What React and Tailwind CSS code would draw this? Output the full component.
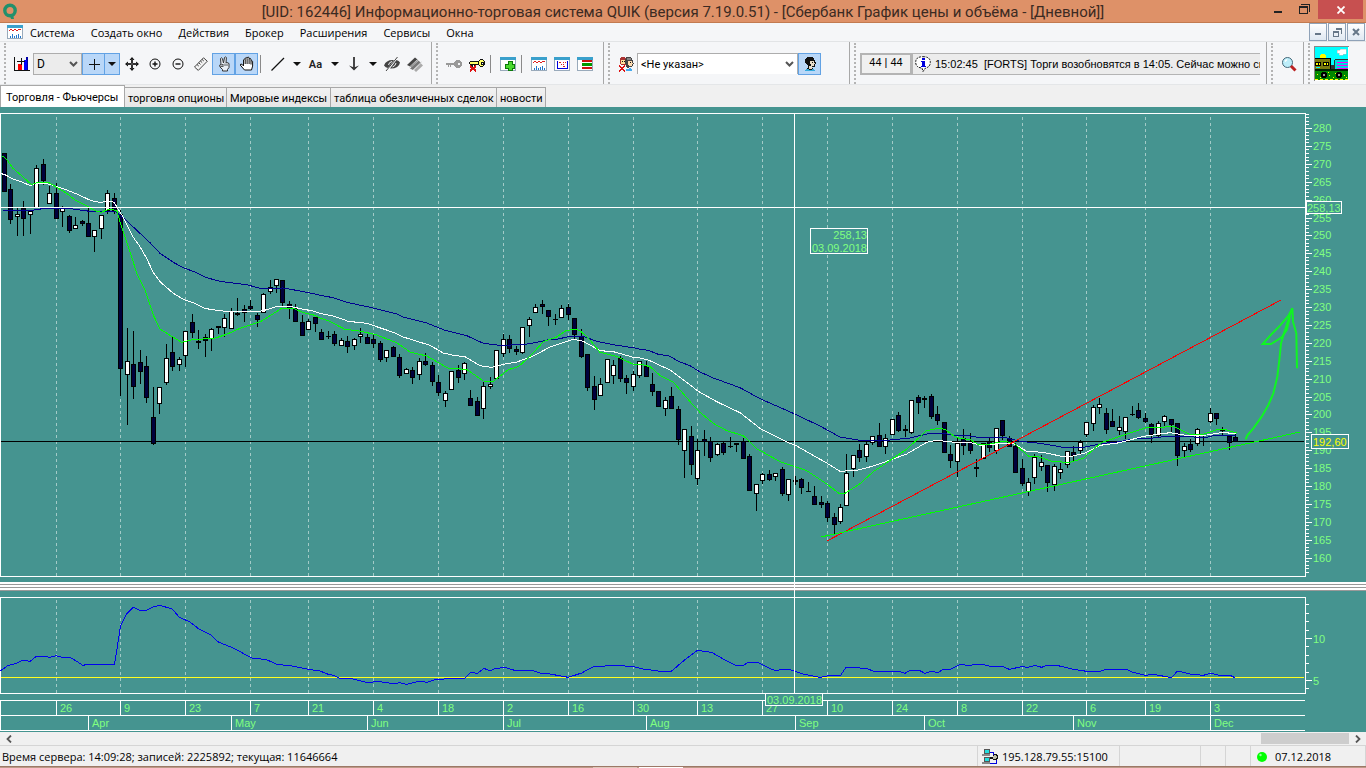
import React from "react";

const UI = "font-['Roboto','Noto_Sans',sans-serif]";
const HUMANIST = "font-['Open_Sans','Noto_Sans',sans-serif]";
const SANS = "font-['Liberation_Sans',Arial,sans-serif]";

/* ---------- chart data: samples are stored in thirds of a pixel, grouped by origin ---------- */

// x, high, body top, body bottom, low, rising (1) or falling (0)
const CANDLES = [
  { ox: 0, oy: 110, rows: [
    [13,129,129,245,245,0],[31,222,237,329,342,0],[52,295,313,322,378,1],[70,273,294,326,378,0],[92,303,303,314,372,1],
    [109,165,174,294,294,1],[130,147,162,213,225,0],[148,228,249,281,281,1],[169,219,249,326,326,0],[187,288,292,305,351,1],
    [208,315,318,362,369,0],[226,321,345,356,356,1],[247,330,333,341,347,0],[265,292,339,380,380,0],[283,360,360,380,426,1],
    [304,315,315,356,387,1],[322,240,249,303,311,1],[343,249,264,303,312,0],[361,300,312,776,858,0],[382,655,753,794,945,1],
    [400,663,762,830,867,0],[421,720,756,785,822,0],[439,738,768,863,879,0],[460,831,921,1001,1004,0],[478,831,831,881,912,1],
    [499,702,744,818,825,1],[517,678,726,770,783,0],[538,741,747,764,783,1],[556,663,663,737,771,1],[577,612,636,668,684,0],
    [595,660,692,698,717,0],[616,672,681,692,741,0],[634,654,657,686,723,1],[655,648,648,654,672,0],[673,612,625,653,681,1],
    [694,595,604,656,656,1],[712,564,608,614,617,0],[733,585,597,608,636,0],[751,570,588,598,600,0],[772,609,615,629,651,0],
    [790,549,552,608,608,1],[811,510,531,545,551,1],[829,507,507,527,549,1],[847,510,510,578,588,0],[868,573,582,597,627,0],
    [886,582,591,635,635,0],[907,615,636,677,677,0],[925,627,633,659,659,1],[946,621,621,641,666,0],[964,657,666,689,689,0],
  ] },
  { ox: 320, oy: 260, rows: [
    [25,213,228,231,237,0],[43,213,222,251,258,0],[64,234,240,257,257,1],[82,228,243,260,279,0],[103,234,238,257,270,1],
    [121,204,222,230,249,1],[142,222,231,251,251,0],[160,225,237,252,264,0],[181,243,249,299,306,0],[199,270,270,293,306,1],
    [220,258,261,290,290,0],[238,282,291,347,354,0],[259,324,327,341,341,1],[277,321,330,353,372,0],[298,294,303,344,360,1],
    [316,279,303,314,318,0],[337,306,315,365,378,0],[355,345,366,398,408,0],[376,393,399,422,441,1],[394,333,333,389,389,1],
    [415,315,330,353,369,0],[433,306,309,341,360,1],[451,390,414,437,437,0],[472,411,423,467,467,0],[490,366,378,446,477,1],
    [511,351,372,380,387,1],[529,270,270,356,356,1],[550,222,237,281,290,1],[568,225,237,266,279,0],[589,258,267,275,285,0],
    [607,201,201,278,282,1],[628,171,177,197,231,1],[646,132,141,158,158,1],[667,120,132,140,162,0],[685,150,150,170,198,0],
    [706,162,177,180,195,0],[724,135,144,173,173,1],[745,132,141,164,180,0],[763,174,174,224,240,0],[784,207,228,290,294,0],
    [802,282,282,383,393,0],[823,348,378,419,450,0],[841,354,372,407,407,1],[862,297,297,368,368,1],[880,300,315,347,372,1],
    [901,288,294,356,366,0],[919,345,354,368,402,0],[940,333,342,380,393,1],[958,303,303,347,354,1],[979,303,318,350,350,0],
  ] },
  { ox: 640, oy: 220, rows: [
    [37,459,492,515,528,0],[55,513,513,560,560,0],[76,531,540,566,588,1],[94,501,528,566,566,0],[115,558,567,659,675,0],
    [133,627,627,692,774,1],[154,618,648,734,765,0],[172,657,690,776,795,1],[193,630,657,665,708,0],[211,651,663,713,726,0],
    [232,669,672,704,707,1],[250,663,669,698,705,0],[271,651,678,681,684,0],[289,669,669,674,696,0],[310,654,663,716,716,0],
    [328,702,708,812,812,0],[349,792,792,821,873,1],[367,759,762,782,792,1],[388,750,762,779,783,0],[406,759,759,770,783,1],
    [427,741,747,821,828,0],[445,777,777,824,843,1],[466,768,780,785,795,0],[484,774,777,803,822,0],[505,786,813,816,816,0],
    [523,798,828,854,854,0],[544,828,846,854,864,0],[562,843,849,893,906,0],[583,879,891,914,945,0],[601,852,861,905,912,1],
    [619,702,759,857,857,1],[640,705,705,746,771,1],[658,672,690,713,726,0],[679,666,672,710,726,1],[697,648,648,668,675,1],
    [718,609,645,680,680,0],[736,642,654,680,702,1],[757,597,597,644,644,1],[775,576,585,632,636,0],[796,615,627,632,651,0],
    [814,540,540,638,642,1],[835,525,531,548,582,0],[853,528,534,539,564,0],[874,522,528,590,597,0],[892,558,582,602,615,0],
    [913,606,606,698,698,0],[931,675,702,722,744,0],[952,654,669,725,771,1],
  ] },
  { ox: 960, oy: 280, rows: [
    [10,447,474,497,525,0],[31,459,483,512,522,0],[49,537,561,566,591,0],[70,489,489,536,536,1],[88,474,483,503,516,0],
    [109,444,444,512,522,1],[127,420,420,467,480,0],[148,468,474,500,500,0],[166,489,498,578,578,0],[187,537,564,611,617,0],
    [205,594,606,635,648,1],[223,522,531,593,612,1],[244,525,546,560,573,1],[262,555,555,608,636,0],[283,552,558,614,633,1],
    [301,549,567,578,597,1],[322,513,513,554,564,1],[340,498,516,527,546,0],[361,480,486,512,522,1],[379,426,426,464,471,1],
    [400,375,381,431,453,1],[418,354,372,383,402,1],[439,384,399,449,462,0],[457,387,423,440,440,0],[478,408,441,452,465,1],
    [496,411,411,455,476,1],[517,378,402,405,408,0],[535,369,390,413,417,0],[556,399,414,425,428,0],[574,429,432,465,488,0],
    [595,423,429,467,474,1],[613,405,408,425,438,1],[634,417,417,434,455,0],[652,429,429,527,558,0],[673,489,498,512,531,1],
    [691,477,492,509,516,0],[712,444,447,491,497,1],[730,468,471,474,497,0],[751,384,399,425,428,1],[769,399,399,416,434,0],
    [787,441,450,453,465,0],[808,468,468,488,510,0],[826,462,471,485,485,0],
  ] },
];

const SLOW = [
  [0, 110, "8,301 100,301 110,298 145,295 205,295 240,300 270,304 345,304 370,323 420,370 450,398 480,430 520,457 550,473 590,488 620,503 660,514 740,524 780,535 850,534 900,543 945,552"],
  [320, 260, "0,106 40,113 85,128 160,144 230,162 250,171 320,189 375,211 440,227 490,250 540,256 610,254 660,245 690,238 715,237 745,230 790,229 830,244 880,254 950,265"],
  [640, 220, "0,388 25,391 55,403 85,407 120,426 150,437 180,456 220,474 300,503 360,536 460,580 540,618 600,651 660,661 740,661 810,654 860,642 900,639 940,645"],
  [960, 280, "0,466 30,468 60,473 130,471 180,484 240,490 310,502 370,502 430,490 480,485 530,475 580,474 620,469 660,470 740,472 770,465 828,467"],
];
const MIDDLE = [
  [0, 110, "0,190 15,194 40,208 60,214 92,227 105,221 130,220 150,223 170,230 200,240 230,252 265,268 285,275 305,277 325,273 343,277 352,294 370,322 400,382 420,410 440,445 460,488 480,515 520,550 550,568 580,578 613,595 650,601 680,604 780,604 805,598 830,589 880,591 905,597 940,603"],
  [320, 260, "0,160 40,168 85,184 140,190 220,217 250,231 330,256 370,279 400,286 435,290 480,317 515,322 550,313 590,306 640,288 690,261 760,238 790,244 840,272 880,275 940,292"],
  [640, 220, "0,414 25,420 90,450 140,487 175,514 230,545 300,578 360,625 400,645 440,666 470,678 560,729 600,754 650,751 700,738 740,724 800,702 860,667 890,661 935,666"],
  [960, 280, "0,487 30,487 60,496 130,490 160,490 200,514 250,517 300,528 340,528 375,519 420,496 480,488 550,469 630,458 690,468 740,465 790,457 828,462"],
];
const FAST = [
  [0, 110, "8,138 20,148 38,174 60,193 95,224 112,217 145,217 170,232 200,250 225,270 260,287 285,302 305,307 325,298 350,301 360,335 380,395 395,440 410,490 435,540 460,615 480,657 520,682 545,697 580,688 640,686 680,673 710,659 740,648 785,633 815,614 845,595 880,595 910,608 945,616"],
  [320, 260, "0,174 25,182 75,208 125,214 170,225 230,248 270,276 320,288 385,325 440,328 490,363 520,364 565,329 595,320 630,289 670,245 710,231 740,211 770,208 785,216 810,240 840,277 890,289 940,313"],
  [640, 220, "0,432 30,440 60,466 100,486 150,545 180,577 220,610 260,632 310,647 350,686 420,725 500,752 560,792 600,822 615,820 660,791 700,755 740,728 800,688 820,669 860,632 895,625 915,628 940,647"],
  [960, 280, "0,476 30,478 55,494 90,492 130,484 160,488 205,528 235,530 280,545 330,547 370,535 425,487 490,466 560,442 600,443 640,438 690,464 730,463 770,449 800,450 830,459"],
];
const VOLATILITY = [
  [0, 570, "0,303 25,286 50,280 70,270 90,274 108,260 135,259 150,262 169,257 185,262 212,263 235,277 248,286 265,283 343,283 350,245 361,170 380,132 400,112 418,121 440,121 460,111 478,106 500,112 518,118 538,142 570,156 598,178 630,193 655,216 700,234 755,264 800,269 830,283 870,287 925,298 960,303 985,313 1000,316 1020,325 1060,327 1100,337 1140,335 1180,341 1200,338 1220,343 1260,333 1280,337 1310,328 1395,324"],
  [470, 570, "2,307 22,310 42,295 60,303 75,296 105,292 140,303 185,301 210,309 240,312 295,322 335,309 370,290 440,286 490,290 520,297 565,303 605,303 640,273 682,241 725,247 760,267 800,287 820,286 835,277 862,277 890,291 918,303 935,298 958,298 1000,312 1050,322 1072,318 1112,316 1128,292 1190,295 1208,303 1285,303 1305,310 1320,301 1348,301 1365,310 1385,304 1403,308"],
  [940, 570, "10,298 32,298 60,284 90,286 110,283 130,284 150,289 190,290 208,298 245,290 265,292 285,286 305,292 320,286 350,286 400,298 440,304 480,304 500,298 560,298 575,306 615,316 640,313 695,323 712,303 755,313 790,316 812,310 840,316 870,316 885,323"],
];
const ARROW = [
  [960, 280, "857,478 862,466 880,445 905,410 925,375 940,340 952,290 958,240 963,190 975,150 990,105 997,85"],
];
const ARROW_LEFT = [[960, 280, "997,85 985,108 960,137 935,162 908,192 933,192 965,172 980,150 990,110"]];
const ARROW_RIGHT = [[960, 280, "997,85 999,125 1009,160 1011,265"]];

function toPoints(groups) {
  return groups
    .flatMap(([ox, oy, pts]) =>
      pts.split(" ").map((p) => {
        const [x, y] = p.split(",").map(Number);
        return `${ox + x / 3},${oy + y / 3}`;
      })
    )
    .join(" ");
}

const WEEKS = [
  [56, "26"], [120, "9"], [185, "23"], [250, "7"], [308, "21"], [373, "4"], [438, "18"], [503, "2"], [568, "16"], [633, "30"],
  [697, "13"], [762, "27"], [827, "10"], [892, "24"], [957, "8"], [1022, "22"], [1086, "6"], [1145, "19"], [1210, "3"],
];
const MONTHS = [
  [88, "Apr"], [231, "May"], [367, "Jun"], [503, "Jul"], [646, "Aug"], [795, "Sep"], [924, "Oct"], [1073, "Nov"], [1210, "Dec"],
];

const priceY = (p) => Math.round(128 + (280 - p) * 3.58);
const indexY = (v) => Math.round(638 + (10 - v) * 8.4);

function Candle({ ox, oy, row }) {
  const [x, h, t, b, l, up] = row;
  const cx = ox + Math.floor(x / 3);
  const y = (v) => oy + Math.round(v / 3);
  const top = y(t);
  const height = Math.max(1, y(b) - top);
  return (
    <g>
      <rect x={cx} y={y(h)} width="1" height={Math.max(1, y(l) - y(h))} fill="#000" />
      <rect x={cx - 2} y={top} width="5" height={height} fill="#000" />
      {height > 2 && <rect x={cx - 1} y={top + 1} width="3" height={height - 2} fill={up ? "#fff" : "#00003c"} />}
    </g>
  );
}

function GridLines({ y1, y2 }) {
  return WEEKS.map(([x]) => (
    <line key={x} x1={x + 0.5} x2={x + 0.5} y1={y1} y2={y2} stroke="#a2cac7" strokeDasharray="3 3" />
  ));
}

function PriceChart() {
  const prices = Array.from({ length: 129 }, (_, i) => 284 - i);
  return (
    <svg className={`block h-[475px] w-full ${SANS} text-[11px]`} viewBox="0 107 1366 475" preserveAspectRatio="none" shapeRendering="crispEdges" role="img" aria-label="График цены">
      <rect x="0" y="107" width="1366" height="475" fill="#459490" />
      <GridLines y1={117} y2={576} />
      <path d="M0.5 576.5V113.5H1305.5V576.5Z" fill="none" stroke="#fff" />
      {prices.map((p) => (
        <rect key={p} x="1306" y={priceY(p)} width={p % 5 ? 3 : 6} height="1" fill="#fff" />
      ))}
      {prices.filter((p) => p % 5 === 0).map((p) => (
        <text key={p} x="1313" y={priceY(p) + 4} fill="#80ff80">{p}</text>
      ))}
      <rect x="1" y="441" width="1303" height="1" fill="#000" />
      {CANDLES.map(({ ox, oy, rows }) => rows.map((row) => <Candle key={`${ox}-${row[0]}`} ox={ox} oy={oy} row={row} />))}
      <polyline points={toPoints(SLOW)} fill="none" stroke="#000090" />
      <polyline points={toPoints(MIDDLE)} fill="none" stroke="#fff" />
      <polyline points={toPoints(FAST)} fill="none" stroke="#00ff00" />
      <line x1="827" y1="541" x2="1281" y2="300" stroke="#f00" />
      <line x1="821" y1="537" x2="1300" y2="432" stroke="#0f0" />
      <g fill="none" stroke="#10f522" strokeWidth="2" shapeRendering="auto">
        <polyline points={toPoints(ARROW)} />
        <polyline points={toPoints(ARROW_LEFT)} />
        <polyline points={toPoints(ARROW_RIGHT)} />
      </g>
      <rect x="1" y="207" width="1304" height="1" fill="#fff" />
      <rect x="1306.5" y="201.5" width="35" height="12" fill="#459490" stroke="#fff" />
      <text x="1307" y="212" fill="#80ff80">258,13</text>
      <rect x="1311.5" y="434.5" width="37" height="14" fill="#459490" stroke="#fff" />
      <text x="1313" y="446" fill="#ff0">192,60</text>
      <rect x="810.5" y="228.5" width="57" height="25" fill="#459490" stroke="#fff" />
      <text x="867" y="239" textAnchor="end" fill="#80ff80">258,13</text>
      <text x="867" y="252" textAnchor="end" fill="#80ff80">03.09.2018</text>
    </svg>
  );
}

function IndicatorChart() {
  const values = [14, 13, 12, 11, 10, 9, 8, 7, 6, 5, 4];
  return (
    <svg className={`block h-[141px] w-full ${SANS} text-[11px]`} viewBox="0 591 1366 141" preserveAspectRatio="none" shapeRendering="crispEdges" role="img" aria-label="Индикатор и шкала времени">
      <rect x="0" y="591" width="1366" height="141" fill="#459490" />
      <GridLines y1={600} y2={693} />
      <path d="M0.5 693.5V597.5H1305.5V693.5Z" fill="none" stroke="#fff" />
      {values.map((v) => (
        <rect key={v} x="1306" y={indexY(v)} width={v % 5 ? 3 : 6} height="1" fill="#fff" />
      ))}
      <text x="1313" y="643" fill="#80ff80">10</text>
      <text x="1313" y="685" fill="#80ff80">5</text>
      <rect x="1" y="677" width="1303" height="1" fill="#ffff20" />
      <polyline points={toPoints(VOLATILITY)} fill="none" stroke="#0000f0" />
      <path d="M0 700.5H1305M0 715.5H1305M0 730.5H1305M0.5 700V731" stroke="#fff" fill="none" />
      {WEEKS.map(([x, label]) => (
        <g key={x}>
          <rect x={x} y="701" width="1" height="14" fill="#fff" />
          <text x={x + 4} y="712" fill="#80ff80">{label}</text>
        </g>
      ))}
      {MONTHS.map(([x, label]) => (
        <g key={x}>
          <rect x={x} y="716" width="1" height="14" fill="#fff" />
          <text x={x + 4} y="727" fill="#80ff80">{label}</text>
        </g>
      ))}
      <rect x="765.5" y="693.5" width="57" height="12" fill="#459490" stroke="#fff" />
      <text x="767" y="704" fill="#80ff80">03.09.2018</text>
    </svg>
  );
}

/* ---------- icons ---------- */

function Icon({ size = 16, children, crisp = true }) {
  return (
    <svg width={size} height={size} viewBox={`0 0 ${size} ${size}`} fill="none" stroke="#111" shapeRendering={crisp ? "crispEdges" : "auto"} className="shrink-0" aria-hidden="true">
      {children}
    </svg>
  );
}

const BarsIcon = () => (
  <Icon>
    <g stroke="none">
      <path d="M0 1h1v13h15v1H0zM1 14h15v1H1z" fill="#111" />
      <rect x="4" y="8" width="4" height="6" fill="#f00" />
      <rect x="10" y="4" width="4" height="10" fill="#00f" />
      <path d="M12 1h2v13h-1V4h-1z" fill="#00a" />
    </g>
    <path d="M3 5.500h8M7.500 2v7" />
  </Icon>
);
const CrossIcon = () => <Icon><path d="M3 8.500h11M8.500 3v11" /></Icon>;
const MoveIcon = () => (
  <Icon crisp={false}>
    <path d="M3 8h10M8 3v10" strokeWidth="2" />
    <path d="M8 1 5.500 4h5zM8 15l-2.500-3h5zM1 8l3-2.500v5zM15 8l-3-2.500v5z" fill="#111" stroke="none" />
    <path d="M8 3v10M3 8h10" stroke="#f5f6f8" strokeOpacity="0.5" strokeWidth="0.600" />
  </Icon>
);
const CircleIcon = ({ plus }) => (
  <Icon crisp={false}>
    <circle cx="8" cy="8" r="5" />
    <path d={plus ? "M5.500 8h5M8 5.500v5" : "M5.500 8h5"} strokeWidth="1.400" />
  </Icon>
);
const RulerIcon = () => (
  <Icon crisp={false}>
    <path d="M1.500 11 10.500 1.800l3.800 3.400-9 9.200z" fill="#f4f4f4" stroke="#444" />
    <path d="m4 8.500 1.800 1.600M5.700 6.800l1.800 1.600M7.400 5l1.800 1.600M9 3.400l1.800 1.600" stroke="#444" />
  </Icon>
);
const FingersIcon = () => (
  <Icon crisp={false}>
    <path d="M5 8.500 4.500 2.500Q5.500 1 6.400 2.500L7.500 7 8.500 1.500Q9.600.3 10.400 1.500L10 7l1-.5 2 1v4l-1.500 2v1.500H6.500v-1.500L4 11l-.3-2z" fill="#e8eef5" stroke="#333" />
    <path d="M5 9l2-.5M7 8v2M9 7.500V10M11 8v2M4.500 10.500h3" stroke="#333" strokeWidth="0.800" />
  </Icon>
);
const HandIcon = () => (
  <Icon crisp={false}>
    <path d="m5.500 14-4.300-5q.3-1.600 2-.6L4.500 10V3.800q.8-1.500 1.700 0V2.300q.9-1.600 1.900 0v-.6q1-1.300 2 0v1.200q1-1 1.900.2v1.900q1-.8 1.600.3v4.800L12.500 14z" fill="#fff" />
    <path d="M6.200 4v4M8.100 2.500V8M10.100 3v5M12 5v3.500" />
  </Icon>
);
const LineIcon = () => <Icon crisp={false}><path d="M1.500 14.500 14 2" strokeWidth="1.200" /></Icon>;
const ArrowDownIcon = () => (
  <Icon crisp={false}>
    <path d="M8 1v12" strokeWidth="1.800" stroke="#333" />
    <path d="M3 9.500 8 14.500l5-5-5 2z" fill="#333" stroke="none" />
  </Icon>
);
const EyeIcon = () => (
  <Icon crisp={false}>
    <path d="M0 9.500Q2 4 8.500 4h1.500L4 12Q1.500 11.500 0 9.500zM16 6.500q-1 6-9.500 6H6L12.500 4Q15 4.500 16 6.500z" fill="#444" stroke="none" />
    <path d="M2 15 13.500 1" stroke="#444" />
    <path d="M4.500 9Q5 6 8 5.500M8.500 11Q11.500 10 12 7" stroke="#f5f6f8" />
  </Icon>
);
const EraserIcon = () => (
  <Icon crisp={false}>
    <path d="m0 9 8-7.500L11 4 4 11z" fill="#444" stroke="none" />
    <path d="m3 12.500 8.500-8L14 7l-8 7z" fill="#777" stroke="none" />
    <path d="m7 14 7-6.500 2 2L9 16z" fill="#aaa" stroke="none" />
    <path d="m2 11.500 9-8.500M6 14l8.500-8" stroke="#ccc" />
  </Icon>
);
const KeyIcon = () => (
  <Icon>
    <path d="M0 7h9v2H5v2H4V9H3v2H2V9H0z" fill="#999" stroke="none" />
    <path d="M8 6h1V5h1V4h4v1h1v1h1v4h-1v1h-1v1h-4v-1H9v-1H8z" fill="#999" stroke="none" />
    <rect x="12" y="7" width="2" height="2" fill="#f5f6f8" stroke="none" />
  </Icon>
);
const KeyOffIcon = () => (
  <Icon>
    <g stroke="none">
      <path d="M0 6h1V5h9v1h1v4h-1V9H6v2H5V9H4v2H2V9H1V8H0z" fill="#111" />
      <path d="M1 6h9v2H1z" fill="#ff6" />
      <path d="M9 5h1V4h1V3h3v1h1v1h1v4h-1v1h-1v1h-3v-1h-1V9H9z" fill="#111" />
      <path d="M10 5h1V4h3v1h1v4h-1v1h-3V9h-1z" fill="#ff6" />
      <path d="M12 6h2v2h-2z" fill="#fff" stroke="#111" strokeWidth="1" />
    </g>
    <path d="m1 10 6 5M7 10l-6 5" stroke="#d11" strokeWidth="2" />
  </Icon>
);
function WindowIcon({ children }) {
  return (
    <Icon>
      <rect x="0.500" y="1.500" width="15" height="13" fill="#fff" stroke="#9ab" />
      <rect x="0" y="1" width="16" height="3" fill="#3aa0cc" stroke="none" />
      {children}
    </Icon>
  );
}
const AddWindowIcon = () => (
  <WindowIcon>
    <path d="M10 5v10M5 10h10" stroke="#0a7a0a" strokeWidth="5" />
    <path d="M10 6v8M6 10h8" stroke="#4ad82e" strokeWidth="3" />
  </WindowIcon>
);
const ChartWindowIcon = () => (
  <WindowIcon>
    <path d="m2 6.500 2-1 2 1 2-1 2 1 2-1h2" stroke="#d22" />
    <path d="M3.500 14v-2M5.500 14v-4M7.500 14v-2M9.500 14v-3M11.500 14v-4M13.500 14v-2" stroke="#27c" />
  </WindowIcon>
);
const DotsWindowIcon = () => (
  <WindowIcon>
    <path d="M3.500 5v7.500h10V5" stroke="#00d" />
    <path d="M5 6.500h2M7 8.500h1M9 6.500h1M9 8.500h1M9 10.500h2M11 6.500h1" stroke="#d22" />
  </WindowIcon>
);
const TableWindowIcon = () => (
  <WindowIcon>
    <g stroke="none">
      <rect x="5" y="4" width="10" height="2" fill="#c11" />
      <rect x="5" y="7" width="10" height="3" fill="#090" />
      <rect x="5" y="11" width="10" height="2" fill="#c11" />
    </g>
  </WindowIcon>
);
const PeopleIcon = () => (
  <Icon>
    <g stroke="none">
      <path d="M2 2h1V1h4v1h1v7H3V8H2z" fill="#a33" />
      <path d="M3 4h4v4H3z" fill="#fd9" />
      <path d="M4 5h1v1H4zM6 5h1v1H6z" fill="#111" />
      <path d="M8 1h5v1h1v2h1v3h1v1h-1v2h-1v1h-3v1H9v-1H8V8H7V3h1z" fill="#444" />
      <path d="M9 2h4v2H9z" fill="#888" />
      <path d="M10 5h4v2h1v1h-1v2h-3V9h-1z" fill="#ffdcb0" />
      <path d="M12 6h1v1h-1z" fill="#111" />
      <path d="M8 15v-2h3v-1h2v1h1v2z" fill="#4ae" />
    </g>
    <path d="m1 9.500 6 6M7 9.500l-6 6" stroke="#d11" strokeWidth="2" />
  </Icon>
);
const PersonIcon = () => (
  <Icon>
    <g stroke="none">
      <path d="M5 1h6v1h1v2h1v2h1v2h-1v3h-3v1h1v2H5v-2h1V9H5V8H4V7H3V3h1V2h1z" fill="#111" />
      <path d="M8 5h4v2h1v1h-1v2H9V8H8z" fill="#e8dcc8" />
      <path d="M10 6h1v1h-1z" fill="#111" />
      <path d="M7 10h3v3H7z" fill="#e8dcc8" />
      <path d="M3 15v-1h1v-1h3v1h3v-1h2v1h1v1z" fill="#3ad" />
    </g>
  </Icon>
);
const InfoIcon = () => (
  <Icon crisp={false}>
    <path d="M8 .7Q15.300.7 15.300 6.200 15.300 11 10.500 12L8 15.500 7 12Q.7 11.500.7 6.200.7.700 8 .700z" fill="#fff" strokeDasharray="2 1" />
    <path d="M7 2h3v2H7zM6 5h4v5h1v1H6v-1h1V6H6z" fill="#00d" stroke="none" />
  </Icon>
);
const SearchIcon = () => (
  <Icon crisp={false}>
    <circle cx="6.500" cy="6.500" r="5" fill="#bdeefa" stroke="#467" />
    <path d="M4 5.500 6 3.500" stroke="#fff" strokeWidth="1.500" />
    <path d="m10 10 4.500 4.500" stroke="#b22" strokeWidth="3" />
  </Icon>
);
const NetIcon = () => (
  <Icon>
    <g stroke="none">
      <rect x="2" y="0" width="6" height="5" fill="#555" />
      <rect x="3" y="1" width="4" height="3" fill="#2dd" />
      <rect x="0" y="5" width="8" height="2" fill="#888" />
      <rect x="2" y="8" width="6" height="5" fill="#555" />
      <rect x="3" y="9" width="4" height="3" fill="#2dd" />
      <rect x="0" y="13" width="8" height="2" fill="#888" />
      <path d="M11 5h4v1h1v4h-1v1h-4v-1H8V8h3z" fill="#111" />
      <path d="M11 7h1V6h2v1h1v2h-1v1h-3z" fill="#bba" />
    </g>
    <path d="M8 3.500h3v2M8 14.500h6.500V11" stroke="#00d" />
  </Icon>
);
const Train = () => (
  <svg width="35" height="35" viewBox="0 0 35 35" shapeRendering="crispEdges" aria-hidden="true">
    <rect width="35" height="35" fill="#fff" />
    <path d="M0 0h35v1H1v34H0z" fill="#888" />
    <rect x="1" y="1" width="33" height="33" fill="#0ff" />
    <path d="M23 4h3V3h6v5h-3v1h-4V7h-2z" fill="#fff" stroke="#bbb" strokeWidth="0.500" />
    <path d="M7 8h4v1h1v3H6V9h1z" fill="#ff0" />
    <rect x="1" y="21" width="33" height="13" fill="#080" />
    <rect x="1" y="12" width="16" height="12" fill="#000" />
    <rect x="1" y="13" width="15" height="10" fill="#7a7a10" />
    <path d="M1 16h6v4H1zM9 16h6v4H9z" fill="#000" />
    <path d="M2 17h2v2H2zM5 17h1v2H5zM10 17h2v2h-2zM13 17h1v2h-1z" fill="#ff0" />
    <rect x="2" y="21" width="4" height="1" fill="#0ff" />
    <path d="M17 19h3v-5h1v-1h13v12H20v-2h-3z" fill="#333" />
    <path d="M21 14h13v10H21z" fill="#0dd" />
    <path d="M23 16.500h11M23 19.500h11M23 22.500h11" stroke="#f0f" />
    <path d="M1 23h33v2H1z" fill="#020" />
    <circle cx="10" cy="29" r="3" fill="#000" />
    <circle cx="25" cy="29" r="3" fill="#000" />
    <rect x="9" y="28" width="2" height="2" fill="#999" />
    <rect x="24" y="28" width="2" height="2" fill="#999" />
    <path d="M3 28.500h1M6 31.500h1M15 29.500h1M19 31.500h1M30 29.500h1M32 31.500h1M21 27.500h1M14 26.500h1" stroke="#ff0" />
    <path d="M1 33.500h33" stroke="#ff0" strokeDasharray="3 2" />
  </svg>
);

/* ---------- toolbar pieces ---------- */

function Tool({ label, active, children }) {
  return (
    <button
      type="button"
      aria-label={label}
      className={`flex h-[22px] w-[23px] shrink-0 items-center justify-center ${active ? "border border-[#62a2e4] bg-[#b9d7f8]" : ""}`}
    >
      {children}
    </button>
  );
}

function Drop({ label, active }) {
  return (
    <button
      type="button"
      aria-label={label}
      className={`flex h-[22px] w-[15px] shrink-0 items-center justify-center ${active ? "border border-l-0 border-[#62a2e4] bg-[#b9d7f8]" : ""}`}
    >
      <svg width="8" height="4" viewBox="0 0 8 4" aria-hidden="true"><path d="M0 0h8L4 4z" fill="#111" /></svg>
    </button>
  );
}

const Separator = () => <div className="flex w-2 shrink-0 justify-start pl-0.5"><div className="h-[18px] w-px bg-[#8a8a8a]" /></div>;
const Chevron = () => (
  <svg width="9" height="6" viewBox="0 0 9 6" className="pointer-events-none absolute right-1 top-2" aria-hidden="true">
    <path d="M1 1l3.500 3.500L8 1" fill="none" stroke="#555" strokeWidth="2" />
  </svg>
);

function Band({ className = "", last, children }) {
  return (
    <div className={`flex h-[42px] items-center pl-1 pt-px ${last ? "" : "border-r border-[#a8a8a8]"} ${className}`}>
      <div className="mr-1 h-[41px] w-0 shrink-0 border-l-2 border-dotted border-[#b4b4b4]" />
      {children}
    </div>
  );
}

const MENU = ["Система", "Создать окно", "Действия", "Брокер", "Расширения", "Сервисы", "Окна"];
const TABS = [
  ["торговля опционы", "w-[102px]"],
  ["Мировые индексы", "w-[104px]"],
  ["таблица обезличенных сделок", "w-[166px]"],
  ["новости", "w-[49px]"],
];

function MdiButton({ label, children }) {
  return (
    <button type="button" aria-label={label} className="flex h-[18px] w-[18px] items-center justify-center border border-[#8fa2b8] bg-gradient-to-b from-white to-[#dfe8f2]">
      {children}
    </button>
  );
}

export default function App() {
  return (
    <div className={`flex min-h-screen w-full flex-col overflow-hidden bg-[#f0f0f0] text-black ${UI}`}>
      <header className="flex h-[23px] items-center border-b border-[#c27a50] bg-[#de9168]">
        <div className="flex-1 pl-[3px]">
          <svg width="15" height="17" viewBox="0 0 15 17" aria-hidden="true">
            <circle cx="7" cy="7.500" r="5.200" fill="none" stroke="#22906c" strokeWidth="3.400" />
            <path d="M6.500 11.500h3.500l1 4.500H8z" fill="#22906c" />
          </svg>
        </div>
        <h1 className="whitespace-nowrap pt-0.5 text-[15px] leading-[20px] text-[#3b2a22]">
          [UID: 162446] Информационно-торговая система QUIK (версия 7.19.0.51) - [Сбербанк График цены и объёма - [Дневной]]
        </h1>
        <div className="flex flex-1 items-start justify-end self-stretch pr-[3px]">
          <button type="button" aria-label="Свернуть" className="flex h-[19px] w-[27px] items-center justify-center">
            <svg width="8" height="8" viewBox="0 0 8 8" aria-hidden="true"><path d="M0 6h8" stroke="#222" strokeWidth="2" /></svg>
          </button>
          <button type="button" aria-label="Восстановить" className="flex h-[19px] w-[27px] items-center justify-center">
            <svg width="11" height="11" viewBox="0 0 11 11" shapeRendering="crispEdges" fill="none" stroke="#222" aria-hidden="true">
              <path d="M2 .5h8.500V8M.5 3.500h8v6h-8z" /><path d="M0 3h9" strokeWidth="2" />
            </svg>
          </button>
          <button type="button" aria-label="Закрыть" className="flex h-[19px] w-[45px] items-center justify-center bg-[#c75050]">
            <svg width="8" height="8" viewBox="0 0 8 8" aria-hidden="true"><path d="m.5.5 7 7m0-7-7 7" stroke="#fff" strokeWidth="1.800" /></svg>
          </button>
        </div>
      </header>

      <nav className={`flex h-[19px] items-center border-b border-[#e2e4e6] bg-[#f5f6f8] pl-[7px] text-[11px] leading-[18px] ${HUMANIST}`}>
        <ChartWindowIcon />
        <div className="flex gap-4 pl-[7px] pt-0.5">
          {MENU.map((m) => <button key={m} type="button" className="whitespace-nowrap">{m}</button>)}
        </div>
        <div className="ml-auto flex gap-px pr-px">
          <MdiButton label="Свернуть окно"><svg width="8" height="8" aria-hidden="true"><path d="M1 6h6" stroke="#678" strokeWidth="2" /></svg></MdiButton>
          <MdiButton label="Восстановить окно">
            <svg width="9" height="9" viewBox="0 0 9 9" fill="none" stroke="#678" shapeRendering="crispEdges" aria-hidden="true"><path d="M3 1.500h5.500V6M.5 4.500h5v4h-5z" /><path d="M2.500 1h6M0 4h6" strokeWidth="2" /></svg>
          </MdiButton>
          <MdiButton label="Закрыть окно"><svg width="8" height="8" aria-hidden="true"><path d="m1 1 6 6m0-6-6 6" stroke="#678" strokeWidth="2" /></svg></MdiButton>
        </div>
      </nav>

      <div className="flex h-[43px] border-b border-[#e4e6e8] bg-[#f5f6f8]" role="toolbar">
        <Band className="w-[432px] shrink-0">
          <Tool label="Тип графика"><BarsIcon /></Tool>
          <div className="relative shrink-0">
            <select aria-label="Интервал" defaultValue="D" className="block h-[22px] w-[49px] appearance-none border border-[#adadad] bg-[#ececec] pl-[3px] text-[12px] leading-[20px]">
              <option>D</option>
            </select>
            <Chevron />
          </div>
          <Tool label="Перекрестие" active><CrossIcon /></Tool>
          <Drop label="Вид курсора" active />
          <Tool label="Переместить"><MoveIcon /></Tool>
          <Tool label="Увеличить"><CircleIcon plus /></Tool>
          <Tool label="Уменьшить"><CircleIcon /></Tool>
          <Tool label="Линейка"><RulerIcon /></Tool>
          <Tool label="Выбор" active><FingersIcon /></Tool>
          <Tool label="Прокрутка" active><HandIcon /></Tool>
          <Separator />
          <Tool label="Линия"><LineIcon /></Tool>
          <Drop label="Вид линии" />
          <Tool label="Текст"><span className="pt-0.5 text-[11px] font-semibold leading-4 text-[#222]">Aa</span></Tool>
          <Drop label="Вид текста" />
          <Tool label="Стрелка"><ArrowDownIcon /></Tool>
          <Drop label="Вид стрелки" />
          <Tool label="Скрыть"><EyeIcon /></Tool>
          <Tool label="Стереть"><EraserIcon /></Tool>
        </Band>
        <Band className="w-[172px] shrink-0">
          <Tool label="Подключить"><KeyIcon /></Tool>
          <Tool label="Отключить"><KeyOffIcon /></Tool>
          <Separator />
          <Tool label="Новое окно"><AddWindowIcon /></Tool>
          <Separator />
          <Tool label="График"><ChartWindowIcon /></Tool>
          <Tool label="Диаграмма"><DotsWindowIcon /></Tool>
          <Tool label="Таблица"><TableWindowIcon /></Tool>
        </Band>
        <Band className="w-[246px] shrink-0">
          <Tool label="Клиенты"><PeopleIcon /></Tool>
          <div className="relative shrink-0">
            <select aria-label="Клиент" defaultValue="<Не указан>" className="block h-[21px] w-[161px] appearance-none border border-b-0 border-[#adadad] bg-white pl-[3px] pt-0.5 text-[11px] leading-[18px]">
              <option>{"<Не указан>"}</option>
            </select>
            <Chevron />
          </div>
          <Tool label="Клиент" active><PersonIcon /></Tool>
        </Band>
        <Band className={`min-w-0 flex-1 ${SANS} text-[11px]`}>
          <div className="flex h-[22px] w-[52px] shrink-0 items-center justify-center border-2 border-[#b4b4b4] bg-[#f0f0f0] pb-0.5">44 | 44</div>
          <div className="mr-1.5 flex h-[22px] min-w-0 flex-1 items-center gap-1 overflow-hidden border-y border-l border-[#b4b4b4] bg-[#ececec] pl-0.5">
            <InfoIcon />
            <span className="whitespace-pre pt-0.5">15:02:45  [FORTS] Торги возобновятся в 14:05. Сейчас можно снимать</span>
          </div>
        </Band>
        <Band className="w-[37px] shrink-0"><Tool label="Поиск"><SearchIcon /></Tool></Band>
        <Band className="w-[62px] shrink-0" last><Train /></Band>
      </div>

      <div className="flex h-[22px] items-end text-[11px] leading-[18px]" role="tablist">
        <button type="button" role="tab" aria-selected="true" className="h-[22px] w-[125px] whitespace-nowrap border border-b-0 border-[#a8a8a8] bg-white pl-[5px] pt-0.5 text-left">
          Торговля - Фьючерсы
        </button>
        {TABS.map(([t, w]) => (
          <button key={t} type="button" role="tab" aria-selected="false" className={`h-[20px] ${w} whitespace-nowrap border-r border-t border-[#a8a8a8] bg-gradient-to-b from-[#f2f2f2] to-[#e6e6e6] pl-[3px] pt-0.5 text-left`}>
            {t}
          </button>
        ))}
      </div>

      <main className="relative">
        <PriceChart />
        <div className="flex h-[9px] flex-col bg-[#f0f0f0]">
          <div className="h-[3px] border-b border-[#999] bg-white" />
          <div className="h-[3px] border-b border-[#999] bg-white" />
          <div className="h-[3px] border-b border-[#999] bg-white" />
        </div>
        <IndicatorChart />
        <div className="absolute left-[794px] top-[7px] h-[579px] w-px bg-white" />
      </main>

      <div className="flex h-[14px] items-center border-b border-[#d5d5d5] bg-[#f0f0f0]">
        <button type="button" aria-label="Прокрутить влево" className="flex w-[17px] justify-center">
          <svg width="6" height="8" viewBox="0 0 6 8" aria-hidden="true"><path d="M5 .5 1.500 4 5 7.500" fill="none" stroke="#555" strokeWidth="1.800" /></svg>
        </button>
        <div className="flex flex-1 justify-end"><div className="h-[11px] w-[88px] bg-[#cdcdcd]" /></div>
        <button type="button" aria-label="Прокрутить вправо" className="flex w-[17px] justify-center">
          <svg width="6" height="8" viewBox="0 0 6 8" aria-hidden="true"><path d="M1 .5 4.500 4 1 7.500" fill="none" stroke="#555" strokeWidth="1.800" /></svg>
        </button>
      </div>

      <footer className={`flex h-5 text-[11px] leading-[22px] ${HUMANIST}`}>
        <div className="min-w-0 flex-1 whitespace-nowrap pl-0.5">Время сервера: 14:09:28; записей: 2225892; текущая: 11646664</div>
        <div className="flex w-[142px] items-center gap-1 border-l border-[#d5d5d5] pl-1 pt-px"><NetIcon />195.128.79.55:15100</div>
        <div className="w-[81px] border-l border-[#d5d5d5]" />
        <div className="w-[25px] border-l border-[#d5d5d5]" />
        <div className="w-[25px] border-l border-[#d5d5d5]" />
        <div className="flex w-[116px] items-center gap-2 border-x border-[#d5d5d5] pl-1.5 pt-px">
          <svg width="10" height="10" viewBox="0 0 10 10" aria-hidden="true"><circle cx="5" cy="5" r="5" fill="#0f0" /><circle cx="3.500" cy="3" r="1.200" fill="#9f9" /></svg>
          07.12.2018
        </div>
      </footer>
      <div className="flex h-0.5 justify-center gap-0.5 border-t border-[#9c7866] bg-[#bd9a88] pr-[90px]">
        <div className="h-px w-11 bg-[#e0c8bc]" />
        <div className="h-px w-11 bg-white" />
      </div>
    </div>
  );
}
